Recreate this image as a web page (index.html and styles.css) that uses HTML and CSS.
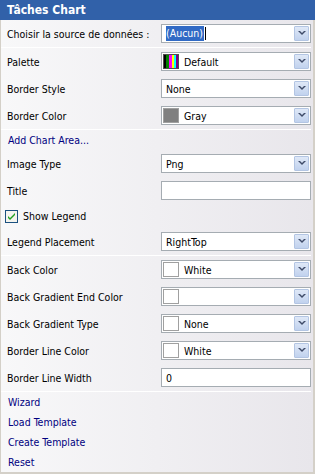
FILE: index.html
```html
<!DOCTYPE html>
<html lang="fr">

<head>
    <meta charset="UTF-8">
    <meta name="viewport" content="width=device-width, initial-scale=1.0">
    <title>Tâches Chart</title>
    <link rel="stylesheet" href="styles.css">
</head>

<body>
    <div class="panel">
        <div class="panel-header">Tâches Chart</div>

        <div class="panel-body">
            <!-- Data source and appearance -->
            <div class="row">
                <span class="label">Choisir la source de données :</span>
                <div class="combo">
                    <span class="value"><span class="selected">(Aucun)</span><span class="caret"></span></span>
                    <span class="drop-btn"><svg width="8" height="5" viewBox="0 0 8 5"><path d="M0 0h2l2 2 2-2h2l-4 4z" fill="#3e4b68"/></svg></span>
                </div>
            </div>
            <div class="divider"></div>
            <div class="row">
                <span class="label">Palette</span>
                <div class="combo">
                    <span class="swatch swatch-palette"></span>
                    <span class="value value-swatch">Default</span>
                    <span class="drop-btn"><svg width="8" height="5" viewBox="0 0 8 5"><path d="M0 0h2l2 2 2-2h2l-4 4z" fill="#3e4b68"/></svg></span>
                </div>
            </div>
            <div class="row">
                <span class="label">Border Style</span>
                <div class="combo">
                    <span class="value">None</span>
                    <span class="drop-btn"><svg width="8" height="5" viewBox="0 0 8 5"><path d="M0 0h2l2 2 2-2h2l-4 4z" fill="#3e4b68"/></svg></span>
                </div>
            </div>
            <div class="row">
                <span class="label">Border Color</span>
                <div class="combo">
                    <span class="swatch swatch-gray"></span>
                    <span class="value value-swatch">Gray</span>
                    <span class="drop-btn"><svg width="8" height="5" viewBox="0 0 8 5"><path d="M0 0h2l2 2 2-2h2l-4 4z" fill="#3e4b68"/></svg></span>
                </div>
            </div>
            <div class="divider"></div>

            <!-- Chart area and legend -->
            <div class="link-row link-row-first"><a href="#">Add Chart Area...</a></div>
            <div class="row">
                <span class="label">Image Type</span>
                <div class="combo">
                    <span class="value">Png</span>
                    <span class="drop-btn"><svg width="8" height="5" viewBox="0 0 8 5"><path d="M0 0h2l2 2 2-2h2l-4 4z" fill="#3e4b68"/></svg></span>
                </div>
            </div>
            <div class="row">
                <span class="label">Title</span>
                <div class="textbox"></div>
            </div>
            <div class="check-row">
                <span class="checkbox"><svg width="13" height="13" viewBox="0 0 13 13"><rect x="0.5" y="0.5" width="12" height="12" fill="#f4f4ee" stroke="#1c5180"/><path d="M3 6l2 2 5-5v2l-5 5-2-2z" fill="#21a121"/></svg></span>
                <span>Show Legend</span>
            </div>
            <div class="row">
                <span class="label">Legend Placement</span>
                <div class="combo">
                    <span class="value">RightTop</span>
                    <span class="drop-btn"><svg width="8" height="5" viewBox="0 0 8 5"><path d="M0 0h2l2 2 2-2h2l-4 4z" fill="#3e4b68"/></svg></span>
                </div>
            </div>
            <div class="divider"></div>

            <!-- Back colours -->
            <div class="row">
                <span class="label">Back Color</span>
                <div class="combo">
                    <span class="swatch swatch-white"></span>
                    <span class="value value-swatch">White</span>
                    <span class="drop-btn"><svg width="8" height="5" viewBox="0 0 8 5"><path d="M0 0h2l2 2 2-2h2l-4 4z" fill="#3e4b68"/></svg></span>
                </div>
            </div>
            <div class="row">
                <span class="label">Back Gradient End Color</span>
                <div class="combo">
                    <span class="swatch swatch-white"></span>
                    <span class="value value-swatch"></span>
                    <span class="drop-btn"><svg width="8" height="5" viewBox="0 0 8 5"><path d="M0 0h2l2 2 2-2h2l-4 4z" fill="#3e4b68"/></svg></span>
                </div>
            </div>
            <div class="row">
                <span class="label">Back Gradient Type</span>
                <div class="combo">
                    <span class="swatch swatch-white"></span>
                    <span class="value value-swatch">None</span>
                    <span class="drop-btn"><svg width="8" height="5" viewBox="0 0 8 5"><path d="M0 0h2l2 2 2-2h2l-4 4z" fill="#3e4b68"/></svg></span>
                </div>
            </div>
            <div class="row">
                <span class="label">Border Line Color</span>
                <div class="combo">
                    <span class="swatch swatch-white"></span>
                    <span class="value value-swatch">White</span>
                    <span class="drop-btn"><svg width="8" height="5" viewBox="0 0 8 5"><path d="M0 0h2l2 2 2-2h2l-4 4z" fill="#3e4b68"/></svg></span>
                </div>
            </div>
            <div class="row">
                <span class="label">Border Line Width</span>
                <div class="textbox"><span class="value">0</span></div>
            </div>
            <div class="divider"></div>

            <!-- Actions -->
            <div class="link-row"><a href="#">Wizard</a></div>
            <div class="link-row"><a href="#">Load Template</a></div>
            <div class="link-row"><a href="#">Create Template</a></div>
            <div class="link-row"><a href="#">Reset</a></div>
        </div>
    </div>
</body>

</html>
```

FILE: styles.css
```css
body {
    margin: 0;
    background-color: #d4d0c8;
    font-family: "DejaVu Sans Condensed", "DejaVu Sans", sans-serif;
    font-size: 10.5px;
    color: #000;
}

.panel {
    width: 315px;
    height: 474px;
}

.panel-header {
    height: 20px;
    line-height: 20px;
    padding-left: 7px;
    background-color: #3161a9;
    color: #fff;
    font-size: 12px;
    font-weight: bold;
}

.panel-body {
    height: 452px;
    border-left: 1px solid #d4d0c8;
    border-right: 2px solid #d4d0c8;
    border-bottom: 2px solid #d4d0c8;
    background: linear-gradient(to right, #f8f8f9, #e8e6eb);
}

/* Label + control rows */
.row {
    display: grid;
    grid-template-columns: 1fr 150px;
    align-items: center;
    height: 27px;
    padding: 0 2px 0 6px;
}

.label {
    white-space: nowrap;
}

.divider {
    height: 1px;
    margin-right: 2px;
    background-color: #fff;
}

/* Combo boxes */
.combo,
.textbox {
    display: flex;
    align-items: center;
    height: 19px;
    box-sizing: border-box;
    border: 1px solid #a5acb2;
    background-color: #fff;
}

.value {
    flex: 1;
    padding-left: 4px;
    white-space: nowrap;
}

.value-swatch {
    padding-left: 5px;
}

.selected {
    background-color: #316ac5;
    color: #fff;
    padding: 1px 1px 2px 0;
}

.caret {
    display: inline-block;
    width: 1px;
    height: 13px;
    margin-left: 1px;
    vertical-align: -3px;
    background-color: #000;
}

.drop-btn {
    display: flex;
    align-items: center;
    justify-content: center;
    width: 15px;
    height: 15px;
    margin-right: 1px;
    box-sizing: border-box;
    border: 1px solid #b3c5e3;
    border-radius: 1px;
    background: linear-gradient(#dfe8f7, #c1d2ee);
}

/* Colour swatches */
.swatch {
    width: 16px;
    height: 15px;
    margin-left: 1px;
    box-sizing: border-box;
    border: 1px solid #a0a0a0;
}

.swatch-white {
    background-color: #fff;
}

.swatch-gray {
    background-color: #808080;
}

.swatch-palette {
    border-color: #505050;
    background: linear-gradient(to right,
            #000 0 2px, #008000 2px 5px, #ff00ff 5px 8px,
            #ffff00 8px 10px, #00ffff 10px 12px, #800080 12px 14px);
}

/* Checkbox row */
.check-row {
    display: flex;
    align-items: center;
    gap: 5px;
    height: 24px;
    padding-left: 4px;
}

.checkbox {
    display: flex;
}

/* Links */
.link-row {
    display: flex;
    align-items: center;
    height: 20px;
    padding-left: 7px;
}

.link-row a {
    color: #000080;
    text-decoration: none;
}
```
